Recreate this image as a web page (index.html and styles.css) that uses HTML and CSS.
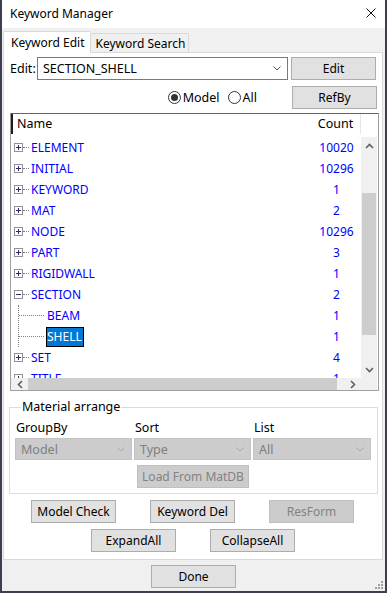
FILE: index.html
```html
<!DOCTYPE html>
<html lang="en">
<head>
  <meta charset="UTF-8">
  <title>Keyword Manager</title>
  <link rel="stylesheet" href="styles.css">
</head>
<body>

  <div class="window">
    <div class="titlebar">
      <span class="title">Keyword Manager</span>
      <svg class="close" width="10" height="10" viewBox="0 0 10 10"><path d="M0.5 0.5 L9.5 9.5 M9.5 0.5 L0.5 9.5" stroke="#111" stroke-width="1" fill="none"/></svg>
    </div>

    <div class="tabs">
      <div class="tab active">Keyword Edit</div>
      <div class="tab">Keyword Search</div>
    </div>

    <div class="panel">
      <div class="edit-row">
        <label class="edit-label">Edit:</label>
        <div class="combo">
          <span>SECTION_SHELL</span>
          <svg width="8" height="5" viewBox="0 0 8 5"><path d="M0.5 0.5 L4 4 L7.5 0.5" stroke="#555" fill="none"/></svg>
        </div>
        <button class="btn">Edit</button>
      </div>

      <div class="scope-row">
        <span class="radio checked"></span><span class="radio-text">Model</span>
        <span class="radio"></span><span class="radio-text">All</span>
        <button class="btn refby">RefBy</button>
      </div>

      <div class="tree">
        <div class="tree-head">
          <div class="col-name">Name</div>
          <div class="col-count">Count</div>
        </div>
        <div class="tree-body">
          <div class="row"><span class="box plus"></span><span class="dots"></span><span class="name">ELEMENT</span><span class="count">10020</span></div>
          <div class="row"><span class="box plus"></span><span class="dots"></span><span class="name">INITIAL</span><span class="count">10296</span></div>
          <div class="row"><span class="box plus"></span><span class="dots"></span><span class="name">KEYWORD</span><span class="count">1</span></div>
          <div class="row"><span class="box plus"></span><span class="dots"></span><span class="name">MAT</span><span class="count">2</span></div>
          <div class="row"><span class="box plus"></span><span class="dots"></span><span class="name">NODE</span><span class="count">10296</span></div>
          <div class="row"><span class="box plus"></span><span class="dots"></span><span class="name">PART</span><span class="count">3</span></div>
          <div class="row"><span class="box plus"></span><span class="dots"></span><span class="name">RIGIDWALL</span><span class="count">1</span></div>
          <div class="row"><span class="box minus"></span><span class="dots"></span><span class="name">SECTION</span><span class="count">2</span></div>
          <div class="children">
            <div class="row child"><span class="child-dots"></span><span class="name">BEAM</span><span class="count">1</span></div>
            <div class="row child"><span class="child-dots"></span><span class="name selected">SHELL</span><span class="count">1</span></div>
          </div>
          <div class="row"><span class="box plus"></span><span class="dots"></span><span class="name">SET</span><span class="count">4</span></div>
          <div class="row"><span class="box plus"></span><span class="dots"></span><span class="name">TITLE</span><span class="count">1</span></div>
        </div>
        <div class="vscroll">
          <div class="arrow"><svg width="9" height="6" viewBox="0 0 9 6"><path d="M1 5 L4.5 1.5 L8 5" stroke="#606060" stroke-width="1.6" fill="none"/></svg></div>
          <div class="vtrack"><div class="vthumb"></div></div>
          <div class="arrow"><svg width="9" height="6" viewBox="0 0 9 6"><path d="M1 1 L4.5 4.5 L8 1" stroke="#606060" stroke-width="1.6" fill="none"/></svg></div>
        </div>
        <div class="hscroll">
          <div class="arrow"><svg width="6" height="9" viewBox="0 0 6 9"><path d="M5 1 L1.5 4.5 L5 8" stroke="#606060" stroke-width="1.6" fill="none"/></svg></div>
          <div class="hthumb"></div>
          <div class="htrack"></div>
          <div class="arrow"><svg width="6" height="9" viewBox="0 0 6 9"><path d="M1 1 L4.5 4.5 L1 8" stroke="#606060" stroke-width="1.6" fill="none"/></svg></div>
        </div>
        <div class="corner"></div>
      </div>

      <fieldset class="group">
        <legend>Material arrange</legend>
        <div class="group-grid">
          <span class="cap">GroupBy</span>
          <span class="cap">Sort</span>
          <span class="cap">List</span>
          <div class="combo disabled"><span>Model</span><svg width="8" height="5" viewBox="0 0 8 5"><path d="M0.5 0.5 L4 4 L7.5 0.5" stroke="#a8a8a8" fill="none"/></svg></div>
          <div class="combo disabled"><span>Type</span><svg width="8" height="5" viewBox="0 0 8 5"><path d="M0.5 0.5 L4 4 L7.5 0.5" stroke="#a8a8a8" fill="none"/></svg></div>
          <div class="combo disabled"><span>All</span><svg width="8" height="5" viewBox="0 0 8 5"><path d="M0.5 0.5 L4 4 L7.5 0.5" stroke="#a8a8a8" fill="none"/></svg></div>
          <span></span>
          <button class="btn disabled load">Load From MatDB</button>
        </div>
      </fieldset>

      <div class="btn-row first">
        <button class="btn">Model Check</button>
        <button class="btn">Keyword Del</button>
        <button class="btn disabled">ResForm</button>
      </div>
      <div class="btn-row second">
        <button class="btn">ExpandAll</button>
        <button class="btn">CollapseAll</button>
      </div>
    </div>

    <div class="footer">
      <button class="btn">Done</button>
      <svg class="grip" width="8" height="8" viewBox="0 0 8 8" fill="#a0a0a0">
        <rect x="6" y="0" width="2" height="2"/><rect x="3" y="3" width="2" height="2"/><rect x="6" y="3" width="2" height="2"/>
        <rect x="0" y="6" width="2" height="2"/><rect x="3" y="6" width="2" height="2"/><rect x="6" y="6" width="2" height="2"/>
      </svg>
    </div>
  </div>

</body>
</html>
```

FILE: styles.css
```css
body {
  margin: 0;
  font-family: "Noto Sans", "Open Sans", sans-serif;
  font-size: 12px;
  color: #000;
  white-space: nowrap;
}
.window {
  width: 387px;
  height: 593px;
  box-sizing: border-box;
  background: #f0f0f0;
  border-left: 2px solid #3e3e4e;
  border-right: 2px solid #3e3e4e;
  border-bottom: 2px solid #3e3e4e;
  display: flex;
  flex-direction: column;
}
.titlebar {
  height: 28px;
  flex: none;
  background: #fff;
  display: flex;
  align-items: center;
  justify-content: space-between;
  padding: 0 9px 0 8px;
  line-height: 16px;
}
.close {
  margin-top: -2px;
}
.tabs {
  height: 24px;
  flex: none;
  display: flex;
  align-items: flex-end;
  padding-left: 1px;
}
.tab {
  box-sizing: border-box;
  height: 19px;
  padding: 0 3px 0 4px;
  line-height: 19px;
  border: 1px solid #d9d9d9;
  border-bottom: none;
  background: #f0f0f0;
  font-size: 12px;
}
.tab.active {
  height: 22px;
  padding: 0 6px 0 7px;
  line-height: 21px;
  background: #fff;
  border-right: none;
  position: relative;
  top: 1px;
}
.panel {
  height: 508px;
  flex: none;
  box-sizing: border-box;
  margin: 0 2px 0 1px;
  border: 1px solid #d9d9d9;
  background: #fff;
}

/* top controls */
.edit-row {
  display: flex;
  align-items: center;
  margin-top: 4px;
  height: 23px;
  padding-left: 6px;
}
.edit-label {
  width: 27px;
  font-size: 12.5px;
}
.combo {
  box-sizing: border-box;
  height: 23px;
  width: 251px;
  border: 1px solid #7a7a7a;
  background: #fff;
  display: flex;
  align-items: center;
  justify-content: space-between;
  padding: 0 6px 0 5px;
  font-size: 12.5px;
}
.btn {
  box-sizing: border-box;
  width: 85px;
  height: 23px;
  padding: 0;
  background: #e1e1e1;
  border: 1px solid #adadad;
  font-family: "Noto Sans", "Open Sans", sans-serif;
  font-size: 12px;
  color: #000;
}
.edit-row .btn {
  margin-left: 3px;
}
.btn.disabled {
  background: #cccccc;
  border-color: #bfbfbf;
  color: #838383;
}
.scope-row {
  display: flex;
  align-items: center;
  justify-content: flex-end;
  margin-top: 6px;
  height: 23px;
  padding-right: 5px;
}
.radio {
  box-sizing: border-box;
  width: 13px;
  height: 13px;
  border: 1px solid #333;
  border-radius: 50%;
  display: flex;
  align-items: center;
  justify-content: center;
}
.radio.checked::after {
  content: "";
  width: 7px;
  height: 7px;
  border-radius: 50%;
  background: #333;
}
.radio-text {
  margin: 0 8px 0 2px;
  font-size: 12.5px;
}
.refby {
  margin-left: 27px;
}

/* tree list */
.tree {
  box-sizing: border-box;
  margin: 4px 0 0 6px;
  width: 369px;
  height: 278px;
  border: 1px solid #a0a0a0;
  border-top-color: #646464;
  display: grid;
  grid-template-columns: 350px 16px;
  grid-template-rows: 23px 241px 12px;
}
.tree-head {
  grid-column: 1 / 3;
  display: flex;
  height: 20px;
  line-height: 20px;
  font-size: 12.5px;
}
.col-name {
  flex: 1;
  border-left: 2px solid #1e1e1e;
  padding-left: 4px;
}
.col-count {
  width: 49px;
  text-align: center;
  border-right: 1px solid #e5e5e5;
  margin-right: 16px;
}
.tree-body {
  overflow: hidden;
  color: #0000ff;
}
.row {
  display: flex;
  align-items: center;
  height: 21px;
  padding-left: 3px;
}
.box {
  box-sizing: border-box;
  width: 9px;
  height: 9px;
  border: 1px solid #919191;
  position: relative;
}
.box::before {
  content: "";
  position: absolute;
  left: 1px;
  top: 3px;
  width: 5px;
  height: 1px;
  background: #2a2a6a;
}
.box.plus::after {
  content: "";
  position: absolute;
  left: 3px;
  top: 1px;
  width: 1px;
  height: 5px;
  background: #2a2a6a;
}
.dots {
  width: 6px;
  border-top: 1px dotted #808080;
  margin-right: 2px;
}
.name {
  flex: 1;
}
.count {
  width: 49px;
  text-align: center;
}
.children {
  margin-left: 7px;
  border-left: 1px dotted #808080;
}
.row.child {
  padding-left: 0;
}
.child-dots {
  width: 25px;
  border-top: 1px dotted #808080;
  margin-right: 3px;
}
.name.selected {
  flex: none;
  box-sizing: border-box;
  height: 20px;
  line-height: 18px;
  margin-left: -1px;
  margin-right: auto;
  padding: 0 1px 0 0;
  background: #0078d7;
  color: #fff;
  border: 1px solid #000;
}
.vscroll {
  background: #f0f0f0;
  display: flex;
  flex-direction: column;
}
.arrow {
  flex: none;
  height: 17px;
  display: flex;
  align-items: center;
  justify-content: center;
}
.vtrack {
  flex: 1;
  padding: 39px 1px 0;
}
.vthumb {
  height: 142px;
  background: #cdcdcd;
}
.hscroll {
  background: #f0f0f0;
  display: flex;
}
.hscroll .arrow {
  width: 17px;
  height: 12px;
}
.hthumb {
  width: 309px;
  background: #cdcdcd;
}
.htrack {
  flex: 1;
}
.corner {
  background: #f0f0f0;
}

/* material arrange group */
.group {
  margin: 8px 4px 0 5px;
  padding: 0 4px 5px 5px;
  border: 1px solid #dcdcdc;
  min-width: 0;
}
.group legend {
  padding: 0 1px;
  margin-left: 6px;
  line-height: 16px;
  font-size: 12.5px;
}
.group-grid {
  display: grid;
  grid-template-columns: 117px 117px 118px;
  column-gap: 2px;
  margin-top: 5px;
}
.cap {
  line-height: 16px;
  font-size: 12.5px;
  padding-left: 1px;
}
.group-grid .combo {
  width: auto;
  height: 22px;
  margin-top: 2px;
}
.combo.disabled {
  background: #cccccc;
  border-color: #c4c4c4;
  color: #7e7e7e;
}
.load {
  width: 112px;
  margin: 5px 0 0 3px;
  color: #8a8a8a;
}

/* bottom buttons */
.btn-row {
  display: flex;
  gap: 34px;
  margin-top: 6px;
}
.btn-row.first {
  padding-left: 27px;
}
.btn-row.second {
  padding-left: 87px;
}
.footer {
  flex: 1;
  display: flex;
  justify-content: center;
  align-items: flex-start;
  padding-top: 5px;
  position: relative;
}
.grip {
  position: absolute;
  right: 2px;
  bottom: 2px;
}
```
